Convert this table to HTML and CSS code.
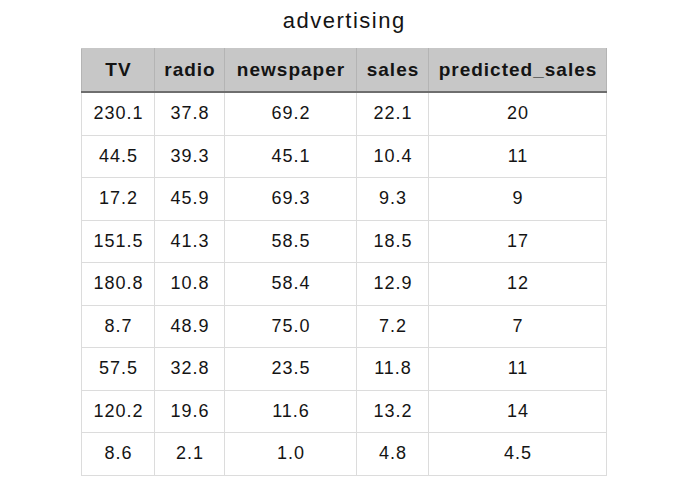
FILE: index.html
```html
<!DOCTYPE html>
<html>
<head>
<meta charset="utf-8">
<link rel="stylesheet" href="styles.css">
</head>
<body>
<div class="page">
  <h1 class="title">advertising</h1>
  <table class="data">
    <colgroup>
      <col class="c-tv"><col class="c-radio"><col class="c-news"><col class="c-sales"><col class="c-pred">
    </colgroup>
    <thead>
      <tr><th>TV</th><th>radio</th><th>newspaper</th><th>sales</th><th>predicted_sales</th></tr>
    </thead>
    <tbody>
      <tr><td>230.1</td><td>37.8</td><td>69.2</td><td>22.1</td><td>20</td></tr>
      <tr><td>44.5</td><td>39.3</td><td>45.1</td><td>10.4</td><td>11</td></tr>
      <tr><td>17.2</td><td>45.9</td><td>69.3</td><td>9.3</td><td>9</td></tr>
      <tr><td>151.5</td><td>41.3</td><td>58.5</td><td>18.5</td><td>17</td></tr>
      <tr><td>180.8</td><td>10.8</td><td>58.4</td><td>12.9</td><td>12</td></tr>
      <tr><td>8.7</td><td>48.9</td><td>75.0</td><td>7.2</td><td>7</td></tr>
      <tr><td>57.5</td><td>32.8</td><td>23.5</td><td>11.8</td><td>11</td></tr>
      <tr><td>120.2</td><td>19.6</td><td>11.6</td><td>13.2</td><td>14</td></tr>
      <tr><td>8.6</td><td>2.1</td><td>1.0</td><td>4.8</td><td>4.5</td></tr>
    </tbody>
  </table>
</div>
</body>
</html>
```
FILE: styles.css
```css
html, body {
  margin: 0;
  padding: 0;
  background: #ffffff;
}
body {
  font-family: "Liberation Sans", Arial, Helvetica, sans-serif;
  color: #141414;
}
.page {
  padding-left: 81px;
  width: 525px;
}
.title {
  margin: 0;
  padding-top: 9px;
  height: 24px;
  line-height: 24px;
  font-size: 22px;
  font-weight: normal;
  text-align: center;
  letter-spacing: 1.5px;
  margin-bottom: 15px;
  text-indent: 1.5px;
}
.data {
  width: 525px;
  border-collapse: collapse;
  table-layout: fixed;
}
.c-tv { width: 73px; }
.c-radio { width: 70px; }
.c-news { width: 132px; }
.c-sales { width: 72px; }
.c-pred { width: 178px; }
.data th {
  background: #c7c7c7;
  font-size: 19px;
  font-weight: bold;
  letter-spacing: 1px;
  height: 42px;
  padding: 0;
  padding-left: 1px;
  text-align: center;
  border-left: 1px solid #b4b4b4;
  border-right: 1px solid #b4b4b4;
  border-top: 1px solid #c7c7c7;
  border-bottom: 2px solid #6e6e6e;
  vertical-align: middle;
}
.data td {
  font-size: 18px;
  letter-spacing: 1px;
  height: 41.5px;
  padding: 0;
  padding-left: 1px;
  text-align: center;
  border: 1px solid #dcdcdc;
  vertical-align: middle;
}
```
